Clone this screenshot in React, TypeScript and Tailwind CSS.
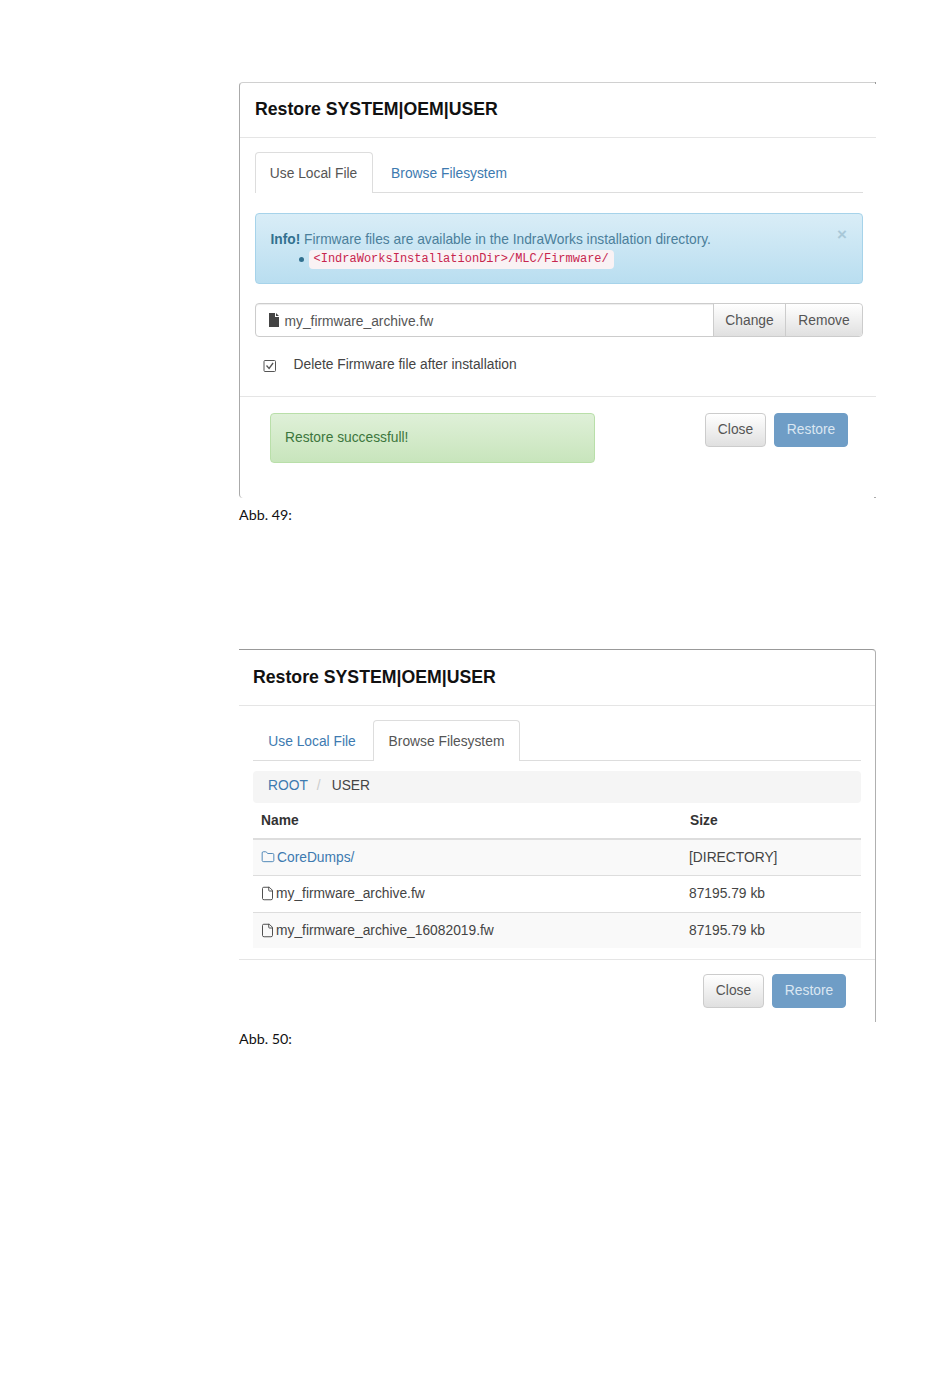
import { File, Folder } from "lucide-react";

const sans = "font-['Liberation_Sans',Arial,sans-serif]";

function Buttons() {
  return (
    <div className="flex gap-2">
      <button className="h-[34px] w-[61px] rounded border border-[#ccc] bg-gradient-to-b from-white to-[#e0e0e0] text-[13.8px] text-[#555]">
        Close
      </button>
      <button className="h-[34px] w-[74px] rounded border border-[#6f9dc6] bg-[#6f9dc6] text-[13.8px] text-[#dbe7f2]">
        Restore
      </button>
    </div>
  );
}

function Tabs({ active }: { active: number }) {
  const items = [
    { label: "Use Local File", width: "w-[118px]", link: "text-[#3d7ab0]" },
    { label: "Browse Filesystem", width: "w-[147px]", link: "pl-[2px] text-[#3d7ab0]" },
  ];
  return (
    <div className="flex h-[41px] gap-[2px] border-b border-[#ddd]">
      {items.map((item, i) =>
        i === active ? (
          <div
            key={item.label}
            className={`${item.width} h-[41px] rounded-t border border-b-0 border-[#ddd] bg-white pt-[11px] text-center text-[13.8px] leading-5 text-[#555]`}
          >
            {item.label}
          </div>
        ) : (
          <div key={item.label} className={`${item.width} ${item.link} pt-[12px] text-center text-[13.8px] leading-5`}>
            {item.label}
          </div>
        ),
      )}
    </div>
  );
}

function Caption({ text }: { text: string }) {
  return <p className="mt-[7px] font-['Lato',sans-serif] text-[14.3px] leading-5 text-[#111]">{text}</p>;
}

function LocalPanel() {
  return (
    <div className="relative h-[416px] w-[637px] rounded-l border-t border-l border-t-[#d0d0d0] border-l-[#aaa] bg-white">
      <div className="h-[55px] border-b border-[#e5e5e5] pt-[13px] pl-[15px]">
        <h2 className="text-[17.7px] leading-[26px] font-bold text-[#111]">Restore SYSTEM|OEM|USER</h2>
      </div>
      <div className="h-[259px] border-b border-[#e5e5e5] pt-[14px] pr-[13px] pl-[14.5px]">
        <Tabs active={0} />
        <div className="relative mt-5 h-[71px] rounded border border-[#a6d3ea] bg-gradient-to-b from-[#d9edf7] to-[#b9def0] pt-[16px] pl-[15px] text-[13.75px] text-[#4b7f9b]">
          <p className="leading-[19px]">
            <b className="text-[#31708f]">Info!</b> Firmware files are available in the IndraWorks installation directory.
          </p>
          <div className="flex h-5 items-center pl-[28px]">
            <span className="h-[5px] w-[5px] rounded-full bg-[#31708f]" />
            <code className="ml-[5px] rounded bg-[#f9f2f4] px-[5px] font-['Liberation_Mono',monospace] text-[12px] leading-[19px] text-[#c7254e]">
              {"<IndraWorksInstallationDir>/MLC/Firmware/"}
            </code>
          </div>
          <span className="absolute top-[11px] right-[15px] text-[17px] leading-5 font-bold text-[#a9c8d8]">×</span>
        </div>
        <div className="mt-[19px] flex h-[34px] rounded border border-[#ccc] shadow-[inset_0_1px_1px_rgba(0,0,0,0.075)]">
          <div className="flex flex-1 items-center pt-[5px] pl-[12px] text-[13.8px] text-[#555]">
            <svg width="12" height="14" viewBox="0 0 12 14" className="mr-[5px] mb-[5px] text-[#444]">
              <path d="M1 0h6v4h4v10H1z M8 0l3 3H8z" fill="currentColor" />
            </svg>
            my_firmware_archive.fw
          </div>
          <div className="flex w-[73px] items-center justify-center border-x border-[#ccc] bg-gradient-to-b from-white to-[#e0e0e0] pt-[2px] text-[13.8px] text-[#555]">
            Change
          </div>
          <div className="flex w-[76px] items-center justify-center rounded-r bg-gradient-to-b from-white to-[#e0e0e0] pt-[2px] text-[13.8px] text-[#555]">
            Remove
          </div>
        </div>
        <div className="mt-[18px] flex items-center pl-[8px] text-[13.8px] leading-5 text-[#444]">
          <svg width="14" height="14" viewBox="0 0 14 14" className="mt-[2px] text-[#555]">
            <rect x="1" y="1.5" width="11.5" height="11" rx="1" fill="none" stroke="currentColor" />
            <path d="M3.5 6.5l2.6 3 4-5.5" fill="none" stroke="currentColor" strokeWidth="1.3" />
          </svg>
          <span className="ml-[17px]">Delete Firmware file after installation</span>
        </div>
      </div>
      <div className="flex justify-between pt-4 pr-[28px] pl-[30px]">
        <div className="h-[50px] w-[325px] rounded border border-[#b9dfa9] bg-gradient-to-b from-[#dff0d8] to-[#c8e5bc] pt-[14px] pl-[14px] text-[13.8px] leading-5 text-[#3c763d]">
          Restore successfull!
        </div>
        <Buttons />
      </div>
      <span className="absolute -top-px right-0 h-[2px] w-px bg-[#999]" />
      <span className="absolute right-0 bottom-0 h-px w-[2px] bg-[#aaa]" />
    </div>
  );
}

const rows = [
  { name: "CoreDumps/", size: "[DIRECTORY]", dir: true, stripe: true, h: "h-[36px]" },
  { name: "my_firmware_archive.fw", size: "87195.79 kb", dir: false, stripe: false, h: "h-[37px]" },
  { name: "my_firmware_archive_16082019.fw", size: "87195.79 kb", dir: false, stripe: true, h: "h-[35px]" },
];

function BrowsePanel() {
  return (
    <div className="h-[373px] w-[637px] rounded-tr border-t border-r border-t-[#999] border-r-[#b0b0b0] bg-white">
      <div className="h-[56px] border-b border-[#e5e5e5] pt-[14px] pl-[14px]">
        <h2 className="text-[17.7px] leading-[26px] font-bold text-[#111]">Restore SYSTEM|OEM|USER</h2>
      </div>
      <div className="h-[254px] border-b border-[#e5e5e5] pt-[14px] pr-[14px] pl-[14px]">
        <Tabs active={1} />
        <div className="mt-[10px] flex h-[32px] items-center rounded bg-[#f5f5f5] pb-px pl-[15px] text-[13.8px]">
          <span className="text-[#3d7ab0]">ROOT</span>
          <span className="ml-[9px] text-[#ccc]">/</span>
          <span className="ml-[11px] text-[#444]">USER</span>
        </div>
        <div className="flex h-[37px] items-center border-b-2 border-[#ddd] pt-[2px] text-[13.8px] font-bold text-[#333]">
          <span className="w-[437px] pl-2">Name</span>
          <span>Size</span>
        </div>
        {rows.map((row) => (
          <div
            key={row.name}
            className={`flex items-center border-b border-[#ddd] pt-px text-[13.8px] text-[#444] last:border-b-0 ${row.h} ${row.stripe ? "bg-[#f9f9f9]" : "bg-white"}`}
          >
            <span className={`flex w-[436px] items-center pl-2 ${row.dir ? "text-[#3d7ab0]" : ""}`}>
              {row.dir ? (
                <Folder size={14} strokeWidth={1.5} className="mr-[2px] mb-[2px]" />
              ) : (
                <File size={15} strokeWidth={1.5} className="mr-[1px] mb-[2px] -ml-px" />
              )}
              {row.name}
            </span>
            <span>{row.size}</span>
          </div>
        ))}
      </div>
      <div className="flex justify-end pt-[14px] pr-[29px]">
        <Buttons />
      </div>
    </div>
  );
}

export default function App() {
  return (
    <div className={`${sans} min-h-[1378px] w-[950px] bg-white pt-[82px] pl-[239px]`}>
      <LocalPanel />
      <Caption text="Abb. 49:" />
      <div className="mt-[124px]">
        <BrowsePanel />
      </div>
      <Caption text="Abb. 50:" />
    </div>
  );
}
